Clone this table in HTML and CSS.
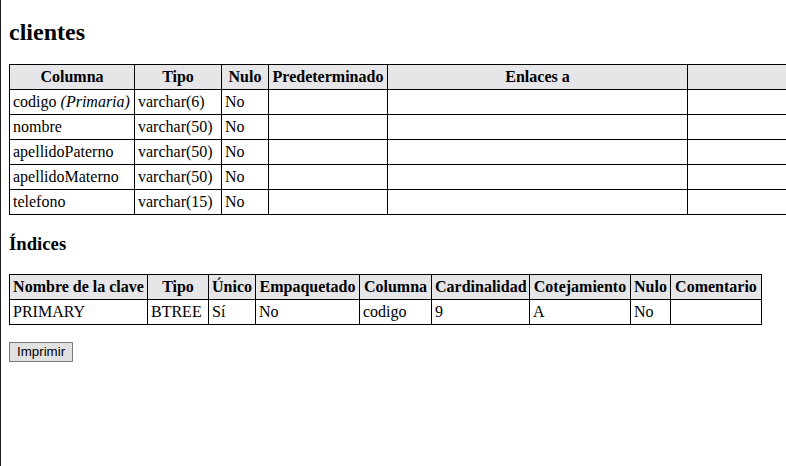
FILE: index.html
```html
<!DOCTYPE html>
<html lang="es">
<head>
<meta charset="utf-8">
<title>clientes</title>
<link rel="stylesheet" href="styles.css">
</head>
<body>
<div class="page">
  <h2 class="title">clientes</h2>
  <table class="grid structure">
    <colgroup>
      <col class="c-col">
      <col class="c-tipo">
      <col class="c-nulo">
      <col class="c-pred">
      <col class="c-enl">
      <col class="c-com">
    </colgroup>
    <thead>
      <tr><th>Columna</th><th>Tipo</th><th>Nulo</th><th>Predeterminado</th><th>Enlaces a</th><th></th></tr>
    </thead>
    <tbody>
      <tr><td>codigo <em>(Primaria)</em></td><td>varchar(6)</td><td>No</td><td></td><td></td><td></td></tr>
      <tr><td>nombre</td><td>varchar(50)</td><td>No</td><td></td><td></td><td></td></tr>
      <tr><td>apellidoPaterno</td><td>varchar(50)</td><td>No</td><td></td><td></td><td></td></tr>
      <tr><td>apellidoMaterno</td><td>varchar(50)</td><td>No</td><td></td><td></td><td></td></tr>
      <tr><td>telefono</td><td>varchar(15)</td><td>No</td><td></td><td></td><td></td></tr>
    </tbody>
  </table>

  <h3 class="subtitle">Índices</h3>
  <table class="grid indexes">
    <colgroup>
      <col class="i-name">
      <col class="i-tipo">
      <col class="i-unico">
      <col class="i-emp">
      <col class="i-col">
      <col class="i-card">
      <col class="i-cot">
      <col class="i-nulo">
      <col class="i-com">
    </colgroup>
    <thead>
      <tr><th>Nombre de la clave</th><th>Tipo</th><th>Único</th><th>Empaquetado</th><th>Columna</th><th>Cardinalidad</th><th>Cotejamiento</th><th>Nulo</th><th>Comentario</th></tr>
    </thead>
    <tbody>
      <tr><td>PRIMARY</td><td>BTREE</td><td>Sí</td><td>No</td><td>codigo</td><td>9</td><td>A</td><td>No</td><td></td></tr>
    </tbody>
  </table>

  <p class="actions"><button type="button" class="print-btn">Imprimir</button></p>
</div>
</body>
</html>
```

FILE: styles.css
```css
html, body {
  margin: 0;
  padding: 0;
  background: #fff;
  overflow: hidden;
}
body {
  height: 466px;
  border-left: 1px solid #1c1c1c;
  font-family: "Liberation Serif", "Times New Roman", serif;
  font-size: 16px;
  color: #000;
}
.page {
  padding: 1px 8px 8px 8px;
}
.title {
  font-size: 24px;
  font-weight: bold;
  margin: 18px 0 18px 0;
}
.subtitle {
  font-size: 18.72px;
  font-weight: bold;
  margin: 18px 0 19px 0;
}
.grid {
  border-collapse: collapse;
}
.grid th, .grid td {
  border: 1px solid #000;
  padding: 3px;
  line-height: 18px;
  white-space: nowrap;
  overflow: hidden;
}
.grid th {
  background: #e6e5e8;
  font-weight: bold;
  text-align: center;
}
.grid td {
  text-align: left;
}
.structure {
  table-layout: fixed;
  width: 1000px;
}
.c-col { width: 125px; }
.c-tipo { width: 87px; }
.c-nulo { width: 47px; }
.c-pred { width: 119px; }
.c-enl { width: 300px; }
.c-com { width: 322px; }

.indexes {
  table-layout: fixed;
  width: 753px;
}
.i-name { width: 138px; }
.i-tipo { width: 61px; }
.i-unico { width: 47px; }
.i-emp { width: 104px; }
.i-col { width: 72px; }
.i-card { width: 98px; }
.i-cot { width: 101px; }
.i-nulo { width: 40px; }
.i-com { width: 91px; }

.actions {
  margin: 17px 0 0 0;
}
.print-btn {
  font-family: "Liberation Sans", Arial, sans-serif;
  font-size: 13.33px;
  color: #000;
  background: #e1e1e1;
  border: 1px solid #7a7a7a;
  border-radius: 0;
  padding: 1px 7px;
  margin: 0;
  line-height: 16px;
}
```
